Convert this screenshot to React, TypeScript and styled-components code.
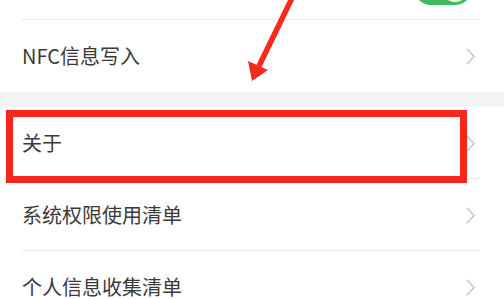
import React from "react";
import styled, { createGlobalStyle } from "styled-components";

const GlobalStyle = createGlobalStyle`
  html, body {
    margin: 0;
    padding: 0;
    background: #ffffff;
  }
  body {
    font-family: "Noto Sans CJK SC", "Noto Sans", sans-serif;
  }
`;

const Screen = styled.div`
  position: relative;
  width: 504px;
  height: 299px;
  overflow: hidden;
  background: #ffffff;
`;

const List = styled.div`
  display: flex;
  flex-direction: column;
  margin-top: -52px;
`;

const Group = styled.div`
  display: flex;
  flex-direction: column;
  background: #ffffff;
`;

const Band = styled.div`
  height: 15px;
  background: #f3f3f3;
`;

type RowProps = {
  $divider?: boolean;
  $bottom?: boolean;
};

const Row = styled.div<RowProps>`
  position: relative;
  height: 72px;
  display: flex;
  align-items: ${(p) => (p.$bottom ? "flex-end" : "center")};
  justify-content: ${(p) => (p.$bottom ? "flex-end" : "space-between")};
  padding: ${(p) => (p.$bottom ? "0 32px 15px 22px" : "0 28px 0 22px")};
  box-sizing: border-box;

  &::after {
    content: "";
    display: ${(p) => (p.$divider ? "block" : "none")};
    position: absolute;
    left: 21px;
    right: 24px;
    bottom: 0;
    height: 1px;
    background: #ececec;
  }
`;

const Label = styled.span`
  font-size: 20px;
  color: #3a3a3a;
  line-height: 1;
`;

const Toggle = styled.div`
  position: relative;
  width: 58px;
  height: 34px;
  border-radius: 17px;
  background: #3bbd59;
`;

const Knob = styled.div`
  position: absolute;
  right: 3px;
  top: 3px;
  width: 28px;
  height: 28px;
  border-radius: 50%;
  background: #ffffff;
`;

const Chevron = () => (
  <svg width="10" height="17" viewBox="0 0 10 17">
    <path d="M1.5 1.5 L8 8.5 L1.5 15.5" fill="none" stroke="#c9c9c9" strokeWidth="1.8" strokeLinecap="round" strokeLinejoin="round" />
  </svg>
);

const Highlight = styled.div`
  position: absolute;
  left: 6px;
  top: 110px;
  width: 461px;
  height: 73px;
  box-sizing: border-box;
  border: 7px solid #f5261b;
  pointer-events: none;
`;

const ArrowMark = styled.svg`
  position: absolute;
  left: 240px;
  top: 0;
  pointer-events: none;
`;

const App = () => (
  <>
    <GlobalStyle />
    <Screen>
      <List>
        <Group>
          <Row $divider $bottom>
            <Toggle>
              <Knob />
            </Toggle>
          </Row>
          <Row>
            <Label>NFC信息写入</Label>
            <Chevron />
          </Row>
        </Group>
        <Band />
        <Group>
          <Row $divider>
            <Label>关于</Label>
            <Chevron />
          </Row>
          <Row $divider>
            <Label>系统权限使用清单</Label>
            <Chevron />
          </Row>
          <Row>
            <Label>个人信息收集清单</Label>
            <Chevron />
          </Row>
        </Group>
      </List>
      <Highlight />
      <ArrowMark width="60" height="85" viewBox="0 0 60 85">
        <line x1="54" y1="-6" x2="19" y2="66" stroke="#f42a1a" strokeWidth="5.5" />
        <polygon points="12,81 8,61 28,70" fill="#f42a1a" />
      </ArrowMark>
    </Screen>
  </>
);

export default App;
